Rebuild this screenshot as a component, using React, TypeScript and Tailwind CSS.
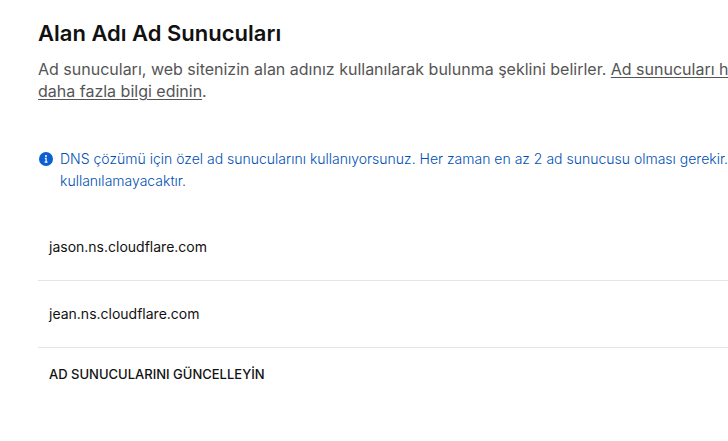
import React from "react";

const nameservers = ["jason.ns.cloudflare.com", "jean.ns.cloudflare.com"];

function InfoIcon() {
  return (
    <svg
      width="14"
      height="14"
      viewBox="0 0 14 14"
      className="mt-1 shrink-0"
      aria-hidden
    >
      <circle cx="7" cy="7" r="7" fill="#0b5fd0" />
      <circle cx="7" cy="4" r="1" fill="#fff" />
      <path
        d="M5.8 6.4H7.1V10M5.6 10.1H8.5"
        fill="none"
        stroke="#fff"
        strokeWidth="1.2"
      />
    </svg>
  );
}

export default function App() {
  return (
    <main className="overflow-hidden whitespace-nowrap bg-white pt-[19px] pb-12 pl-[38px] font-['Inter','Liberation_Sans',sans-serif] text-[#111]">
      <h1 className="text-[22px] leading-7 font-semibold">
        Alan Adı Ad Sunucuları
      </h1>
      <p className="mt-[11px] text-[16px] leading-[22px] text-[#555]">
        Ad sunucuları, web sitenizin alan adınız kullanılarak bulunma şeklini
        belirler.{" "}
        <a href="#nameservers" className="underline underline-offset-2">
          Ad sunucuları h
          <br />
          daha fazla bilgi edinin
        </a>
        .
      </p>

      <div className="mt-[46px] ml-px flex gap-[7px] text-[14px] leading-[22px] font-light text-[#0050b4]">
        <InfoIcon />
        <p>
          DNS çözümü için özel ad sunucularını kullanıyorsunuz. Her zaman en az
          2 ad sunucusu olması gerekir.
          <br />
          kullanılamayacaktır.
        </p>
      </div>

      <ul id="nameservers" className="mt-[22px] text-[14px] leading-[22px]">
        {nameservers.map((ns) => (
          <li key={ns} className="border-b border-[#e5e5e5] py-[22px] pl-[11px]">
            {ns}
          </li>
        ))}
      </ul>

      <button
        type="button"
        className="mt-[15px] pl-[11px] text-[13px] leading-[22px] font-medium"
      >
        AD SUNUCULARINI GÜNCELLEYİN
      </button>
    </main>
  );
}
